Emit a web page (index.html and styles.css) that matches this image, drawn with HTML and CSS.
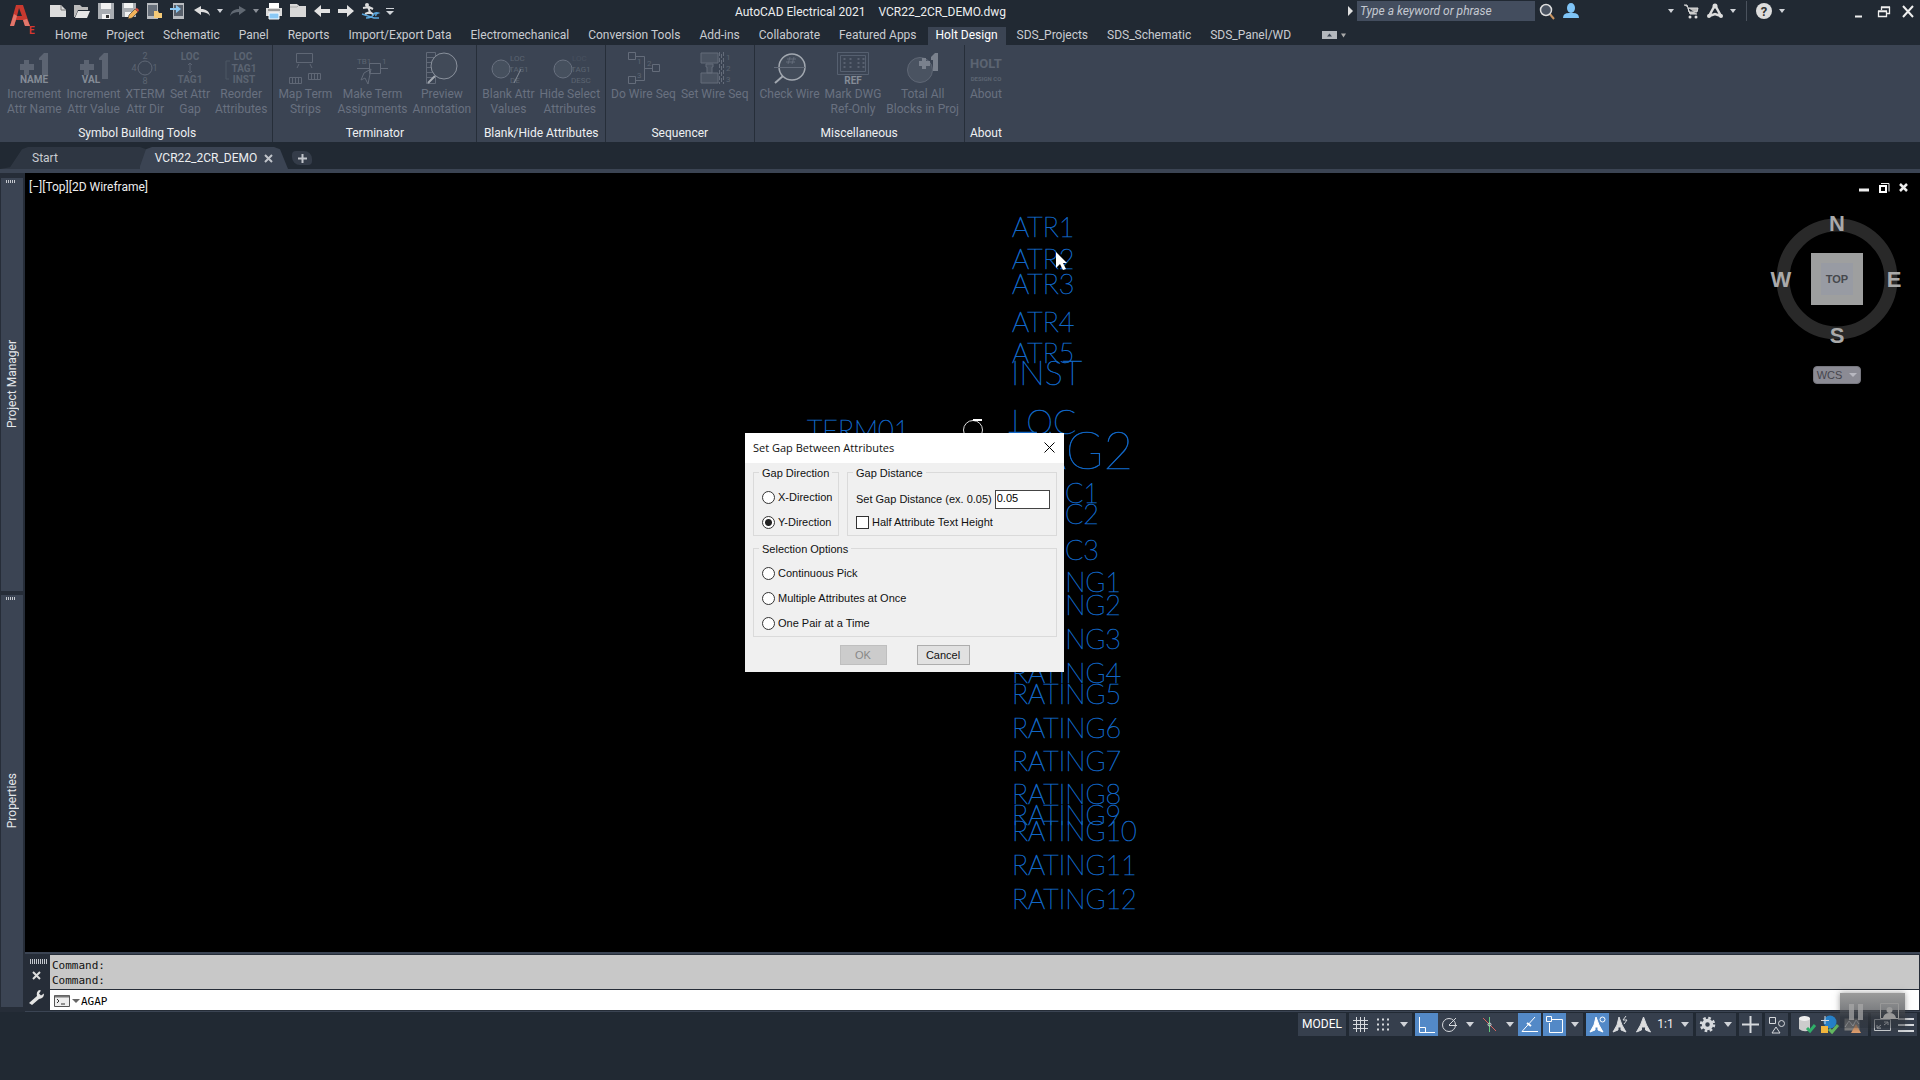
FILE: index.html
```html
<!DOCTYPE html>
<html lang="en">
<head>
    <meta charset="UTF-8">
    <meta name="viewport" content="width=device-width, initial-scale=1.0">
    <title>AutoCAD Electrical 2021 - VCR22_2CR_DEMO.dwg</title>
    <link rel="stylesheet" href="styles.css">
</head>
<body>

    <header class="topbar">
        <button class="app-logo" aria-label="Application menu">
            <svg width="36" height="42" viewBox="0 0 36 42">
                <path d="M10 26 16 5h7l7 21h-5l-2-6h-7l-2 6zM17 16h5l-3-8z" fill="#c8392f" fill-rule="evenodd"/>
                <path d="M10 26l4-12 3 2-3 10zM25 26l-2-6 4-1 3 7z" fill="#e2776c"/>
                <text x="29" y="34" font-size="10" font-weight="700" fill="#d8372f">E</text>
            </svg>
        </button>

        <div class="titlebar">
            <div class="quick">
                <button class="tool" aria-label="New"><svg viewBox="0 0 24 22"><path d="M4 5h11l5 5v7H4z" fill="#dcdcdc"/><path d="M15 5v5h5" fill="none" stroke="#777"/></svg></button>
                <button class="tool" aria-label="Open"><svg viewBox="0 0 24 22"><path d="M4 17V5h6l2 2h6v3H8L5 17z" fill="#bbb"/><path d="M8 11h12l-3 7H5z" fill="#e6e6e6"/></svg></button>
                <button class="tool" aria-label="Save"><svg viewBox="0 0 24 22"><path d="M4 3h16v16H4z" fill="#a9adb2"/><path d="M7 3h10v6H7zM8 14h8v5H8z" fill="#f2f2f2"/><path d="M12 15h3v3h-3z" fill="#333"/></svg></button>
                <button class="tool" aria-label="Save As"><svg viewBox="0 0 24 22"><path d="M4 3h14v14H4z" fill="#a9adb2"/><path d="M6 3h9v5H6zM7 12h6v5H7z" fill="#f2f2f2"/><path d="m11 15 6-6 3 3-6 6-4 1z" fill="#f3b35a" stroke="#333" stroke-width=".6"/><path d="m17 9 3 3 1-2-2-2z" fill="#e04f3d"/></svg></button>
                <button class="tool" aria-label="Open from mobile"><svg viewBox="0 0 24 22"><path d="M5 3h11v16H5z" fill="#b9bcc0"/><path d="M6 5h9v11H6z" fill="#68707b"/><path d="M12 18v-7h4l1 2h3v5z" fill="#f5ca77"/></svg></button>
                <button class="tool" aria-label="Save to mobile"><svg viewBox="0 0 24 22"><path d="M7 3h11v16H7z" fill="#b9bcc0"/><path d="M8 5h9v11H8z" fill="#59616c"/><path d="M4 8h6V5l5 4-5 4v-3H4z" fill="#8bc9f5"/></svg></button>
                <button class="tool" aria-label="Undo"><svg viewBox="0 0 24 22"><path d="m4 10 7-4v3c5 0 8 2 9 7-2-3-5-4-9-4v3z" fill="#ddd"/></svg></button>
                <button class="drop" aria-label="Undo list"></button>
                <button class="tool" aria-label="Redo"><svg viewBox="0 0 24 22"><path d="m20 10-7-4v3c-5 0-8 2-9 7 2-3 5-4 9-4v3z" fill="#606872"/></svg></button>
                <button class="drop dim" aria-label="Redo list"></button>
                <button class="tool" aria-label="Plot"><svg viewBox="0 0 24 22"><path d="M7 3h10v5H7z" fill="#fff"/><path d="M4 8h16v8H4z" fill="#dcdcdc"/><path d="M7 13h10v6H7z" fill="#8bc9f5" stroke="#fff"/><path d="M6 10h12" stroke="#555"/></svg></button>
                <button class="tool" aria-label="Project"><svg viewBox="0 0 24 22"><path d="M4 4h7l2 2h7v11H4z" fill="#d8d8d8"/><path d="M4 7h7l2-2" fill="none" stroke="#aaa"/></svg></button>
                <button class="tool" aria-label="Previous drawing"><svg viewBox="0 0 24 22"><path d="m4 11 7-6v4h9v4h-9v4z" fill="#e2e2e2"/></svg></button>
                <button class="tool" aria-label="Next drawing"><svg viewBox="0 0 24 22"><path d="m20 11-7-6v4H4v4h9v4z" fill="#e2e2e2"/></svg></button>
                <button class="tool" aria-label="Surfer"><svg viewBox="0 0 24 22"><circle cx="9" cy="5" r="2" fill="#ddd"/><path d="M5 8l6-1 4 2M10 7l2 5-5 2M12 12l4 3" stroke="#ddd" stroke-width="2" fill="none"/><path d="M4 14l12 4h5M8 18q6 0 7-3t5-2q-3 1-2 3" stroke="#5aa7de" stroke-width="1.4" fill="none"/></svg></button>
                <button class="drop bar" aria-label="Customize toolbar"></button>
            </div>

            <h1 class="title"><span>AutoCAD Electrical 2021</span><span>VCR22_2CR_DEMO.dwg</span></h1>

            <div class="search">
                <span class="search-arrow"></span>
                <input type="text" class="search-box" placeholder="Type a keyword or phrase" aria-label="Search">
                <button class="tool" aria-label="Find"><svg viewBox="0 0 24 22"><path d="m14 13 5 6" stroke="#c8935f" stroke-width="2"/><circle cx="11" cy="10" r="5.500" fill="#4a5361" stroke="#ddd" stroke-width="1.500"/></svg></button>
                <button class="tool" aria-label="Sign in"><svg viewBox="0 0 24 22"><ellipse cx="12" cy="8" rx="4" ry="5" fill="#7fc4f7"/><path d="M4 18q0-5 6-5h4q6 0 6 5z" fill="#7fc4f7"/></svg></button>
            </div>
            <div class="account">
                <button class="drop" aria-label="Account"></button>
                <button class="tool" aria-label="App store"><svg viewBox="0 0 24 22"><path d="M5 5h3l3 9h7M9 8h10l-1 4h-8z" fill="#bbb" stroke="#ddd"/><circle cx="11" cy="17" r="1.500" fill="#ddd"/><circle cx="17" cy="17" r="1.500" fill="#ddd"/></svg></button>
                <button class="tool" aria-label="Autodesk apps"><svg viewBox="0 0 24 22"><path d="M12 5 6 16M12 5l6 11M6 16l6-2 6 2" stroke="#ddd" stroke-width="2.500" fill="none"/><circle cx="12" cy="6" r="2.500" fill="#ddd"/><circle cx="6" cy="16" r="2" fill="#ddd"/><circle cx="18" cy="16" r="2" fill="#ddd"/></svg></button>
                <button class="drop" aria-label="Apps list"></button>
                <span class="divider"></span>
                <button class="tool" aria-label="Help"><svg viewBox="0 0 24 22"><circle cx="12" cy="11" r="8" fill="#ddd"/><text x="12" y="16" font-size="13" font-weight="700" text-anchor="middle" fill="#333">?</text></svg></button>
                <button class="drop" aria-label="Help list"></button>
            </div>
            <div class="window-buttons">
                <button class="tool" aria-label="Minimize"><svg viewBox="0 0 24 22"><path d="M7 16.500h7" stroke="#eee" stroke-width="2"/></svg></button>
                <button class="tool" aria-label="Restore"><svg viewBox="0 0 24 22"><path d="M9.500 10V7.500h8v6H15M6.500 11.500h8v5h-8zM6 11h9M9 7h9" stroke="#eee" fill="none" stroke-width="1.300"/></svg></button>
                <button class="tool" aria-label="Close"><svg viewBox="0 0 24 22"><path d="m7 6 10 11M17 6 7 17" stroke="#eee" stroke-width="2"/></svg></button>
            </div>
        </div>

        <nav class="tabs">
            <button>Home</button>
            <button>Project</button>
            <button>Schematic</button>
            <button>Panel</button>
            <button>Reports</button>
            <button>Import/Export Data</button>
            <button>Electromechanical</button>
            <button>Conversion Tools</button>
            <button>Add-ins</button>
            <button>Collaborate</button>
            <button>Featured Apps</button>
            <button class="active">Holt Design</button>
            <button>SDS_Projects</button>
            <button>SDS_Schematic</button>
            <button>SDS_Panel/WD</button>
            <button class="collapse" aria-label="Minimize ribbon"><svg width="24" height="8" viewBox="0 0 24 8"><path d="M0 0h15v8H0z" fill="#b3b7bd"/><path d="m5 5.500 2.500-3 2.500 3z" fill="#3b4453"/><path d="M19 2.500h5l-2.500 4z" fill="#aaa"/></svg></button>
        </nav>
    </header>

    <div class="ribbon">
        <section class="panel">
            <div class="panel-tools">
                <button class="cmd"><svg viewBox="0 0 32 32"><path d="M21 6l5-5h4v22h-6V8h-3zM6 8h5v4h5v6h-5v5H6v-5H2v-6h4z"/><text x="16" y="31" font-size="10" font-weight="700" text-anchor="middle" class="lit">NAME</text></svg>Increment<br>Attr Name</button>
                <button class="cmd"><svg viewBox="0 0 32 32"><path d="M21 6l5-5h4v26h-6V8h-3zM6 8h5v4h5v6h-5v5H6v-5H2v-6h4z"/><text x="13" y="31" font-size="10" font-weight="700" text-anchor="middle" class="lit">VAL</text></svg>Increment<br>Attr Value</button>
                <button class="cmd"><svg viewBox="0 0 32 32"><circle cx="16" cy="16" r="7" fill="none" stroke="#606876"/><text x="16" y="7" font-size="9" text-anchor="middle">2</text><text x="5" y="19" font-size="9" text-anchor="middle">4</text><text x="26" y="19" font-size="9" text-anchor="middle">1</text><text x="16" y="32" font-size="9" text-anchor="middle">8</text></svg>XTERM<br>Attr Dir</button>
                <button class="cmd"><svg viewBox="0 0 32 32"><g font-size="10" font-weight="700" text-anchor="middle"><text x="16" y="8">LOC</text><text x="16" y="31">TAG1</text></g><path d="M16 11v10m-2-8 2-2 2 2m-4 6 2 2 2-2" fill="none" stroke="#596170"/></svg>Set Attr<br>Gap</button>
                <button class="cmd"><svg viewBox="0 0 32 32"><g font-size="10" font-weight="700" text-anchor="middle"><text x="18" y="8">LOC</text><text x="19" y="20">TAG1</text><text x="19" y="31">INST</text></g><path d="M5 9H1v18h3" fill="none" stroke="#4d5664"/></svg>Reorder<br>Attributes</button>
            </div>
            <h2>Symbol Building Tools</h2>
        </section>
        <section class="panel">
            <div class="panel-tools">
                <button class="cmd"><svg viewBox="0 0 32 32"><path d="M7.500 1.500h16v9h-16zM.500 25.500h12v6h-12zM3.500 26v5M6.500 26v5M9.500 26v5M19.500 21.500h12v6h-12zM22.500 22v5M25.500 22v5M28.500 22v5M10 12l-2 4M21 12l2 4" fill="none" stroke="#5f6775"/></svg>Map Term<br>Strips</button>
                <button class="cmd"><svg viewBox="0 0 32 32"><text x="1" y="12" font-size="8">TB1</text><text x="26" y="12" font-size="8">1</text><path d="M1 16.500h12m12 0h7M13.500 11.500h11v10h-11zM15 17l-3 15-3-6-4 2 3-7z" fill="none" stroke="#626a78"/></svg>Make Term<br>Assignments</button>
                <button class="cmd"><svg viewBox="0 0 32 32"><path d="M.500.500h9v31h-9zM1 5.500h8M1 10.500h8M1 15.500h8M1 20.500h8M1 25.500h8" fill="none" stroke="#626a78"/><circle cx="18" cy="14" r="13" fill="#414a58" stroke="#8a919c"/><path d="M9 24l-7 7" stroke="#a2a8b0" stroke-width="2"/></svg>Preview<br>Annotation</button>
            </div>
            <h2>Terminator</h2>
        </section>
        <section class="panel">
            <div class="panel-tools">
                <button class="cmd"><svg viewBox="0 0 32 32"><circle cx="9" cy="17" r="9" fill="#46505e" stroke="#697180"/><g font-size="8"><text x="18" y="9">LOC</text><text x="17" y="20">TAG1</text><text x="18" y="31">DE</text></g><path d="M29 17l-7 14" stroke="#858c97"/></svg>Blank Attr<br>Values</button>
                <button class="cmd"><svg viewBox="0 0 32 32"><circle cx="9" cy="17" r="9" fill="#46505e" stroke="#697180"/><g font-size="8"><text x="18" y="9" opacity=".4">LOC</text><text x="17" y="20">TAG1</text><text x="17" y="31">DESC</text></g></svg>Hide Select<br>Attributes</button>
            </div>
            <h2>Blank/Hide Attributes</h2>
        </section>
        <section class="panel">
            <div class="panel-tools">
                <button class="cmd"><svg viewBox="0 0 32 32"><path d="M.500.500h7v7h-7zM.500 24.500h7v7h-7zM24.500 12.500h7v7h-7zM8 4.500h8.500v24H8M17 16.500h7" fill="none" stroke="#646c7a"/><text x="9" y="12" font-size="8">1</text><text x="19" y="14" font-size="8">2</text><text x="9" y="26" font-size="8">3</text></svg>Do Wire Seq</button>
                <button class="cmd"><svg viewBox="0 0 32 32"><path d="M2 1h17v10H2zM2 21h17v10H2zM7 12h7v3h-1v6H8v-6H7z" fill="#4a5361" stroke="#646c7a"/><path d="M20.500 0v32M24.500 0v32M22.500 2v28" fill="none" stroke="#646c7a" stroke-dasharray="4 2"/><text x="27" y="8" font-size="8">1</text><text x="27" y="19" font-size="8">2</text><text x="27" y="30" font-size="8">3</text></svg>Set Wire Seq</button>
            </div>
            <h2>Sequencer</h2>
        </section>
        <section class="panel">
            <div class="panel-tools">
                <button class="cmd"><svg viewBox="0 0 32 32"><circle cx="18" cy="15" r="13" fill="#434c5a" stroke="#a2a8b0" stroke-width="1.500"/><path d="M0 15.500h31M16 5l-2 7M20 5l-2 7M13 7h9M12 10h9" stroke="#646c7a" fill="none"/><path d="M9 24l-8 7" stroke="#a2a8b0" stroke-width="2"/></svg>Check Wire</button>
                <button class="cmd"><svg viewBox="0 0 32 32"><path d="M.500.500h31v22H.500zM3.500 3.500h25v16h-25z" fill="none" stroke="#566070"/><path d="M7.500 6v12M13.500 6v12M21.500 6v12M26.500 6v12" stroke="#596170" stroke-width="2" stroke-dasharray="2 2"/><text x="16" y="32" font-size="10" font-weight="700" text-anchor="middle" class="lit">REF</text></svg>Mark DWG<br>Ref-Only</button>
                <button class="cmd"><svg viewBox="0 0 32 32"><circle cx="13" cy="18" r="12.500" fill="#4a5361" stroke="#5f6775"/><path d="M24 5l4-4h3v18h-5V8h-2zM15 6h4v3h4v5h-4v3h-4v-3h-3V9h3z" fill="#7a818d"/></svg>Total All<br>Blocks in Proj</button>
            </div>
            <h2>Miscellaneous</h2>
        </section>
        <section class="panel">
            <div class="panel-tools">
                <button class="cmd"><svg viewBox="0 0 32 32"><text x="16" y="16" font-size="13" font-weight="700" text-anchor="middle">HOLT</text><text x="16" y="29" font-size="6" font-weight="700" text-anchor="middle">DESIGN CO</text></svg>About</button>
            </div>
            <h2>About</h2>
        </section>
    </div>

    <div class="file-tabs">
        <button class="file-tab start">Start</button>
        <button class="file-tab current">VCR22_2CR_DEMO<svg width="9" height="9" viewBox="0 0 9 9"><path d="m1 1 7 7M8 1 1 8" stroke="#c0c4ca" stroke-width="2"/></svg></button>
        <button class="file-tab add" aria-label="New tab"><svg width="9" height="9" viewBox="0 0 9 9"><path d="M4.500 0v9M0 4.500h9" stroke="#c0c4ca" stroke-width="2"/></svg></button>
    </div>

    <main class="workspace">
        <aside class="palettes">
            <div class="palette"><span>Project Manager</span></div>
            <div class="palette"><span>Properties</span></div>
        </aside>

        <div class="model">
            <div class="canvas">
                <!-- symbol attributes in model space -->
                <svg class="drawing" width="1895" height="779" viewBox="25 173 1895 779">
                    <g class="attr">
                        <text x="1012" y="237">ATR1</text>
                        <text x="1012" y="269">ATR2</text>
                        <text x="1012" y="294">ATR3</text>
                        <text x="1012" y="332">ATR4</text>
                        <text x="1012" y="363">ATR5</text>
                        <text x="1011" y="385" class="mid">INST</text>
                        <text x="1011" y="434" class="mid">LOC</text>
                        <text x="1133" y="469" class="big end">TAG2</text>
                        <text x="807" y="440">TERM01</text>
                        <text x="1099" y="503" class="end">DESC1</text>
                        <text x="1099" y="524" class="end">DESC2</text>
                        <text x="1099" y="560" class="end">DESC3</text>
                        <text x="1121" y="592" class="end">RATING1</text>
                        <text x="1121" y="615" class="end">RATING2</text>
                        <text x="1121" y="649" class="end">RATING3</text>
                        <text x="1012" y="683">RATING4</text>
                        <text x="1012" y="704">RATING5</text>
                        <text x="1012" y="738">RATING6</text>
                        <text x="1012" y="771">RATING7</text>
                        <text x="1012" y="804">RATING8</text>
                        <text x="1012" y="825">RATING9</text>
                        <text x="1012" y="841">RATING10</text>
                        <text x="1012" y="875">RATING11</text>
                        <text x="1012" y="909">RATING12</text>
                    </g>
                    <circle cx="973" cy="430" r="9.500" fill="none" stroke="#ddd"/>
                    <path d="M973 420h9" stroke="#fff" stroke-width="2"/>
                    <path d="M1056 252v16l4-4 3 6 3-1-3-6h4z" fill="#fff"/>
                </svg>
                <div class="view-label">[−][Top][2D Wireframe]</div>
                <div class="view-buttons">
                    <svg width="50" height="11" viewBox="0 0 50 11"><path d="M0 8h10" stroke="#eee" stroke-width="3"/><path d="M22 1.500h8v8" fill="none" stroke="#eee"/><path d="M21 4h6v6h-6z" fill="none" stroke="#fff" stroke-width="2"/><path d="m41 2 7 7M48 2l-7 7" stroke="#eee" stroke-width="2.500"/></svg>
                </div>
                <div class="viewcube">
                    <svg width="140" height="140" viewBox="0 0 140 140">
                        <circle cx="70" cy="70" r="54" fill="none" stroke="#292929" stroke-width="13"/>
                        <g font-size="22" font-weight="700" text-anchor="middle" fill="#aaa">
                            <text x="70" y="22">N</text><text x="14" y="78">W</text><text x="127" y="78">E</text><text x="70" y="134">S</text>
                        </g>
                        <path d="M44 44h52v52H44z" fill="#9e9f9f"/>
                        <path d="M54 54h32v32H54z" fill="#989ba3"/>
                        <text x="70" y="74" font-size="11" font-weight="700" text-anchor="middle" fill="#45484d">TOP</text>
                    </svg>
                    <button class="wcs">WCS<i></i></button>
                </div>

                <form class="dialog" role="dialog" aria-label="Set Gap Between Attributes">
                    <div class="dialog-title">
                        <span>Set Gap Between Attributes</span>
                        <button type="button" aria-label="Close"><svg width="11" height="11" viewBox="0 0 11 11"><path d="m.500.500 10 10M10.500.500l-10 10" stroke="#000"/></svg></button>
                    </div>
                    <div class="dialog-body">
                        <fieldset>
                            <legend>Gap Direction</legend>
                            <label><input type="radio" name="direction">X-Direction</label>
                            <label><input type="radio" name="direction" checked>Y-Direction</label>
                        </fieldset>
                        <fieldset>
                            <legend>Gap Distance</legend>
                            <label class="distance">Set Gap Distance (ex. 0.05)<input type="text" value="0.05"></label>
                            <label><input type="checkbox">Half Attribute Text Height</label>
                        </fieldset>
                        <fieldset class="wide">
                            <legend>Selection Options</legend>
                            <label><input type="radio" name="selection">Continuous Pick</label>
                            <label><input type="radio" name="selection">Multiple Attributes at Once</label>
                            <label><input type="radio" name="selection">One Pair at a Time</label>
                        </fieldset>
                    </div>
                    <div class="dialog-buttons">
                        <button type="button" class="ok" disabled>OK</button>
                        <button type="button" class="cancel">Cancel</button>
                    </div>
                </form>
            </div>

            <div class="command">
                <div class="command-side">
                    <i class="grip"></i>
                    <button aria-label="Close command line"><svg width="9" height="9" viewBox="0 0 9 9"><path d="m1 1 7 7M8 1 1 8" stroke="#ddd" stroke-width="2"/></svg></button>
                    <button aria-label="Customize"><svg width="15" height="15" viewBox="0 0 15 15"><path d="M0 13 8 6q-1-4 2-6l2 .500-2 3 2 2 3-2q0 4-3 5l-2 .500-7 6z" fill="#e4e4e4"/></svg></button>
                </div>
                <div class="command-main">
                    <div class="history">Command:<br>Command:</div>
                    <div class="prompt">
                        <svg width="27" height="12" viewBox="0 0 27 12"><path d="M.500.500h15v11H.500z" fill="#eee" stroke="#555"/><path d="M1 1.500h14" stroke="#777" stroke-width="2"/><path d="m3 4 2 2-2 2M7 9h4" fill="none" stroke="#333"/><path d="M18 4h8l-4 4z" fill="#666"/></svg>
                        <input type="text" value="AGAP" aria-label="Command">
                    </div>
                </div>
                <div class="recorder">
                    <svg width="65" height="35" viewBox="0 0 65 35"><path d="M9 11h5v16H9zM18 11h5v16h-5z" fill="#aaa" opacity=".7"/><path d="M40.500 10.500h18v15h-18z" fill="none" stroke="#999"/><circle cx="49.500" cy="17" r="3" fill="#999"/><path d="M43 25q1-5 6.500-5t6.500 5z" fill="#999"/></svg>
                </div>
            </div>
        </div>
    </main>

    <footer class="status">
        <div class="group"><button class="model-btn">MODEL</button></div>
        <div class="group">
            <button class="st" aria-label="Grid"><svg viewBox="0 0 23 23"><path d="M7.500 4v15M11.500 4v15M15.500 4v15M4 7.500h15M4 11.500h15M4 15.500h15"/></svg></button>
            <button class="st" aria-label="Snap"><svg viewBox="0 0 23 23"><path d="M5 6.500h14M5 11.500h14M5 16.500h14" stroke-width="2" stroke-dasharray="2 3"/></svg></button>
            <button class="drop big" aria-label="Snap options"></button>
        </div>
        <div class="group">
            <button class="st on" aria-label="Ortho"><svg viewBox="0 0 23 23"><path d="M4.500 4v15.500H20M5 14.500h5.500v5"/></svg></button>
            <button class="st" aria-label="Polar"><svg viewBox="0 0 23 23"><circle cx="11" cy="12" r="6.500"/><path d="M11 12.500h8M11 12l7-7"/></svg></button>
            <button class="drop big" aria-label="Polar options"></button>
            <button class="st" aria-label="Isometric"><svg viewBox="0 0 23 23"><path d="M5 5l13 13" stroke="#d9645f"/><path d="M11.500 4v15" stroke="#5fc878"/><circle cx="11.500" cy="11.500" r="1.500"/></svg></button>
            <button class="drop big" aria-label="Isometric options"></button>
            <button class="st on" aria-label="Object snap tracking"><svg viewBox="0 0 23 23"><path d="M17 4 4 18.500h16"/><path d="M9 10l4 3" stroke-width="2"/></svg></button>
            <i class="notch"></i>
            <button class="st on" aria-label="Object snap"><svg viewBox="0 0 23 23"><path d="M9 6.500h10.500v13h-13V10M3.500 3.500h5v5h-5z"/></svg></button>
            <button class="drop big" aria-label="Object snap options"></button>
        </div>
        <div class="group">
            <button class="st on" aria-label="Annotation visibility"><svg viewBox="0 0 23 23"><path d="m10 4 3 8 4 7-5-2v-3H9v3l-5 2 4-7z" fill="#fff"/><circle cx="16.500" cy="6.500" r="2.500"/></svg></button>
            <button class="st" aria-label="Auto scale"><svg viewBox="0 0 23 23"><path d="m10 4 3 8 4 7-5-2v-3H9v3l-5 2 4-7z" fill="#ddd"/><path d="m17 3-3 4h4l-3 4"/></svg></button>
            <button class="st" aria-label="Annotation scale"><svg viewBox="0 0 23 23"><path d="m11.500 4 3 8 4 7-5-2v-3h-4v3l-5 2 4-7z" fill="#ddd"/></svg></button>
            <button class="scale">1:1</button>
            <button class="drop big" aria-label="Scale list"></button>
        </div>
        <div class="group">
            <button class="st" aria-label="Workspace"><svg viewBox="0 0 23 23"><circle cx="11.500" cy="11.500" r="4" stroke-width="3.500"/><circle cx="11.500" cy="11.500" r="6.500" stroke-width="2.500" stroke-dasharray="2.600 2.500"/></svg></button>
            <button class="drop big" aria-label="Workspace list"></button>
        </div>
        <div class="group"><button class="st" aria-label="Annotation monitor"><svg viewBox="0 0 23 23"><path d="M11.500 3v17M3 11.500h17" stroke-width="2"/></svg></button></div>
        <div class="group"><button class="st" aria-label="Isolate objects"><svg viewBox="0 0 23 23"><path d="M4.500 4.500h6v6h-6zM11 14l4 6H7z"/><circle cx="16.500" cy="10.500" r="3"/></svg></button></div>
        <div class="group roomy">
            <button class="st" aria-label="Database"><svg viewBox="0 0 23 23"><path d="M4 5v11q5 4 11 1V5z" fill="#ccc" stroke="none"/><ellipse cx="9.500" cy="5.500" rx="5.500" ry="2.500" fill="#eee" stroke="none"/><path d="m12 15 3 3 5-6" stroke="#2fae68" stroke-width="3"/></svg></button>
            <button class="st" aria-label="Sync"><svg viewBox="0 0 23 23"><circle cx="12" cy="9" r="6.500" fill="#2680c8" stroke="none"/><path d="M3 13h7v7H3z" fill="#f1b53c" stroke="none"/><path d="M7 3v8M3 7.500h8"/><path d="m11 16 3 3 6-7" stroke="#63b760" stroke-width="3"/></svg></button>
            <button class="st" aria-label="Performance"><svg viewBox="0 0 23 23"><path d="M3.500 5.500h15v12h-15z" fill="#888" stroke="none"/><path d="m4 14 4-6 4 5 3-6 3 4" stroke="#ddd"/><path d="m15 11 5 9H10z" fill="#e2a06f" stroke="none"/></svg></button>
        </div>
        <div class="group">
            <button class="st" aria-label="Clean screen"><svg viewBox="0 0 23 23"><path d="M3.500 6.500h16v11h-16zM6 15l4-3M17 9l-4 3M6 12v3h4M13 9h4v3"/></svg></button>
            <button class="st" aria-label="Customization"><svg viewBox="0 0 23 23"><path d="M4 6h16M4 12h16M4 18h16" stroke-width="2"/></svg></button>
        </div>
    </footer>

</body>
</html>
```

FILE: styles.css
```css
* { box-sizing: border-box; }
body { margin: 0; min-height: 100vh; padding-bottom: 44px; display: flex; flex-direction: column; background: #212933; color: #c9ccd1; font-family: Roboto, "Noto Sans", sans-serif; font-size: 12px; line-height: 15px; overflow-x: hidden; }
button { padding: 0; border: 0; background: none; color: inherit; font: inherit; display: flex; align-items: center; justify-content: center; white-space: nowrap; }
input { font: inherit; }
h1, h2 { margin: 0; font-size: 12px; font-weight: 400; }
svg { display: block; }

/* title bar and ribbon tabs */
.topbar { display: grid; grid-template-columns: 46px 1fr; grid-template-rows: 27px 18px; }
.app-logo { grid-row: 1 / 3; align-items: flex-start; justify-content: flex-start; }
.titlebar { display: flex; align-items: flex-start; height: 22px; }
.quick, .search, .account, .window-buttons { display: flex; align-items: center; }
.tool { width: 24px; height: 22px; }
.tool svg { width: 24px; height: 22px; }
.drop { width: 12px; height: 22px; }
.drop::before { content: ""; border: 3px solid transparent; border-top: 4px solid #d0d3d8; border-bottom: 0; }
.drop.dim::before { border-top-color: #8b9098; }
.drop.bar { width: 16px; flex-direction: column; gap: 2px; }
.drop.bar::before { order: 2; border-width: 4px 4px 0; }
.drop.bar::after { content: ""; width: 8px; height: 1px; background: #d0d3d8; }
.title { flex: 1; display: flex; justify-content: center; gap: 13px; line-height: 24px; color: #eceef0; }
.search-arrow { width: 14px; display: flex; justify-content: center; }
.search-arrow::before { content: ""; border: 5px solid transparent; border-left-color: #e0e0e0; border-right: 0; }
.search-box { width: 178px; height: 20px; padding: 0 3px; border: 0; background: #434d5e; color: #fff; font-style: italic; }
.search-box::placeholder { color: #c3c8d0; }
.account { margin-left: 82px; }
.account .drop { margin-right: 2px; }
.divider { width: 1px; height: 20px; margin: 0 5px; background: #4a525d; }
.window-buttons { margin-left: 58px; }
.tabs { display: flex; gap: 3px; padding-left: 1px; }
.tabs button { height: 18px; padding: 0 8px 2px; }
.tabs .active { background: #3b4453; color: #fff; }
.tabs .collapse { margin-left: 12px; }

/* ribbon */
.ribbon { display: flex; height: 97px; padding-left: 2px; background: #3b4453; }
.panel { display: flex; flex-direction: column; justify-content: space-between; padding: 7px 5px 1px; border-right: 1px solid #262e39; }
.panel:last-child { border-right: 0; }
.panel-tools { display: flex; justify-content: center; gap: 5px; }
.cmd { flex-direction: column; justify-content: flex-start; color: #697180; }
.cmd svg { width: 32px; height: 32px; margin-bottom: 3px; fill: #5c6472; overflow: visible; }
.cmd .lit { fill: #858c97; }
.panel h2 { line-height: 16px; text-align: center; white-space: nowrap; color: #eef0f2; }

/* drawing tabs */
.file-tabs { display: flex; align-items: flex-end; height: 31px; border-bottom: 4px solid #3b4453; }
.file-tab { height: 22px; padding-top: 1px; }
.start { width: 156px; padding-left: 32px; justify-content: flex-start; background: #2e3642; clip-path: polygon(0 100%, 10px 92%, 22px 10%, 28px 0, 140px 0, 146px 10%, 146px 100%); }
.current { width: 148px; margin-left: -16px; gap: 7px; background: #3b4453; color: #eceef0; clip-path: polygon(0 88%, 6px 10%, 12px 0, 134px 0, 140px 10%, 148px 100%, 0 100%); }
.add { width: 20px; height: 14px; margin: 0 0 4px 4px; border-radius: 4px 8px 4px 8px; background: #343c49; }

/* palettes on the left */
.workspace { flex: 1; display: flex; min-height: 0; }
.palettes { width: 25px; display: flex; flex-direction: column; gap: 4px; padding: 5px 2px 5px 1px; background: #262d38; }
.palette { flex: 1; display: flex; align-items: center; justify-content: center; background: #3b4453; color: #e4e6e9; position: relative; }
.palette::before, .grip { content: ""; width: 10px; height: 4px; background: repeating-linear-gradient(90deg, #c4c8ce 0 1px, transparent 1px 2px); }
.palette::before { position: absolute; top: 2px; left: 5px; height: 3px; }
.palette span { writing-mode: vertical-rl; transform: rotate(180deg); }

/* model space */
.model { flex: 1; min-width: 0; display: flex; flex-direction: column; }
.canvas { flex: 1; position: relative; background: #000; overflow: hidden; }
.drawing { position: absolute; left: 0; top: 0; }
.attr { font-family: Lato, "Open Sans", sans-serif; font-weight: 100; font-size: 27px; fill: #1166c4; stroke: #1166c4; stroke-width: 0.6; }
.attr .mid { font-size: 34px; }
.attr .big { font-size: 51px; }
.attr .end { text-anchor: end; }
.view-label { position: absolute; left: 4px; top: 7px; color: #eee; }
.view-buttons { position: absolute; right: 11px; top: 9px; }
.viewcube { position: absolute; right: 13px; top: 36px; display: flex; flex-direction: column; align-items: center; gap: 17px; font-family: "Liberation Sans", sans-serif; }
.viewcube svg { overflow: visible; }
.wcs { width: 48px; height: 18px; gap: 7px; border: 1px solid #77777f; border-radius: 4px; background: #8b8b94; color: #45454d; font-size: 11px; }
.wcs i { border: 4px solid transparent; border-top-color: #b8b8c0; border-bottom: 0; }

/* gap dialog */
.dialog { position: absolute; left: 720px; top: 260px; width: 319px; height: 239px; background: #f0f0f0; color: #111; font-family: "Liberation Sans", Arial, sans-serif; font-size: 11px; line-height: 13px; }
.dialog-title { height: 30px; padding: 0 9px 2px 8px; display: flex; justify-content: space-between; align-items: center; background: #fff; font-family: "Open Sans", sans-serif; }
.dialog-body { display: grid; grid-template-columns: 86px 1fr; gap: 6px 8px; padding: 3px 7px 0 8px; }
fieldset { position: relative; margin: 6px 0 0; padding: 14px 8px 0; border: 1px solid #dadada; min-width: 0; height: 64px; display: flex; flex-direction: column; gap: 5px; }
fieldset.wide { grid-column: 1 / 3; height: 89px; }
legend { position: absolute; top: -6px; left: 5px; padding: 0 3px; background: #f0f0f0; }
fieldset label { display: flex; align-items: center; height: 20px; gap: 3px; white-space: nowrap; flex: none; }
input[type=radio], input[type=checkbox] { appearance: none; width: 13px; height: 13px; margin: 0; border: 1px solid #333; background: #fff; flex: none; }
input[type=radio] { border-radius: 50%; }
input[type=radio]:checked { background: radial-gradient(#222 0 3px, #fff 4px); }
fieldset .distance { justify-content: space-between; padding-top: 4px; }
.distance input { width: 55px; height: 19px; padding: 0 1px 2px; border: 1px solid #444; background: #fff; }
.dialog-buttons { display: flex; justify-content: center; gap: 30px; margin-top: 8px; }
.dialog-buttons button { height: 20px; border: 1px solid #adadad; background: #e1e1e1; }
.dialog-buttons .ok { width: 47px; border-color: #bfbfbf; background: #ccc; color: #888; }
.dialog-buttons .cancel { width: 53px; }

/* command line */
.command { position: relative; display: flex; height: 60px; border-top: 2px solid #3b4453; border-bottom: 1px solid #3b4453; background: #262d38; font-family: "DejaVu Sans Mono", monospace; font-size: 11px; line-height: 15px; color: #111; }
.command-side { width: 25px; display: flex; flex-direction: column; align-items: center; padding: 5px 3px 0 0; }
.grip { width: 17px; height: 5px; margin-left: 5px; }
.command-side button { height: 22px; }
.command-main { flex: 1; display: flex; flex-direction: column; padding: 1px 1px 1px 0; gap: 1px; }
.history { height: 34px; padding: 3px 2px; background: #c8c8c8; }
.prompt { flex: 1; display: flex; align-items: center; padding: 2px 0 0 4px; background: #fff; }
.prompt input { flex: 1; padding: 0; border: 0; outline: 0; }
.recorder { position: absolute; right: 15px; top: 39px; z-index: 2; background: linear-gradient(rgba(130, 130, 130, .8), rgba(50, 54, 60, .7) 70%, rgba(40, 44, 50, .4)); box-shadow: 0 0 6px rgba(60, 60, 60, .5); }

/* status bar */
.status { display: flex; justify-content: flex-end; gap: 3px; padding: 1px 3px 0 0; height: 24px; }
.group { display: flex; height: 23px; background: #363f4d; }
.roomy { padding: 0 4px; }
.st { width: 23px; height: 23px; }
.st svg { width: 23px; height: 23px; fill: none; stroke: #d6d9dd; }
.on { background: #5389c7; }
.on svg { stroke: #fff; }
.notch { width: 2px; background: #262e39; }
.drop.big { width: 17px; height: 23px; }
.drop.big::before { border-width: 5px 4px 0; }
.model-btn { width: 48px; color: #fff; }
.scale { width: 21px; color: #eee; }
```
